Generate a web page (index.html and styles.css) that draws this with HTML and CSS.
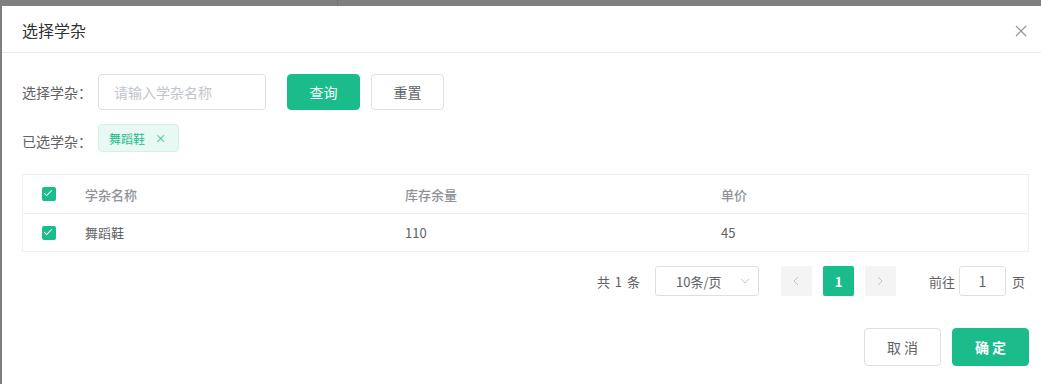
FILE: index.html
```html
<!DOCTYPE html>
<html lang="zh-CN">

<head>
    <meta charset="UTF-8">
    <meta name="viewport" content="width=device-width, initial-scale=1.0">
    <title>选择学杂</title>
    <link rel="stylesheet" href="styles.css">
</head>

<body>

    <!-- Dialog -->
    <div class="dialog">
        <div class="dialog-header">
            <span class="dialog-title">选择学杂</span>
            <span class="dialog-close">
                <svg width="12" height="12" viewBox="0 0 12 12"><path d="M1 1L11 11M11 1L1 11" stroke="#909399" stroke-width="1.2" fill="none"/></svg>
            </span>
        </div>

        <div class="dialog-body">
            <!-- Search -->
            <div class="search-row">
                <label class="form-label">选择学杂：</label>
                <input type="text" class="text-input" placeholder="请输入学杂名称">
                <button class="btn btn-primary btn-search">查询</button>
                <button class="btn btn-plain">重置</button>
            </div>

            <!-- Selected -->
            <div class="selected-row">
                <label class="form-label">已选学杂：</label>
                <span class="tag">舞蹈鞋 <span class="tag-close">×</span></span>
            </div>

            <!-- Table -->
            <div class="table">
                <div class="tr th">
                    <div class="td col-check"><span class="checkbox"></span></div>
                    <div class="td col-name">学杂名称</div>
                    <div class="td col-stock">库存余量</div>
                    <div class="td col-price">单价</div>
                </div>
                <div class="tr">
                    <div class="td col-check"><span class="checkbox"></span></div>
                    <div class="td col-name">舞蹈鞋</div>
                    <div class="td col-stock">110</div>
                    <div class="td col-price">45</div>
                </div>
            </div>

            <!-- Pagination -->
            <div class="pager">
                <span class="pager-total">共 1 条</span>
                <span class="pager-size">10条/页
                    <svg width="10" height="6" viewBox="0 0 10 6"><path d="M1 1L5 5L9 1" stroke="#c0c4cc" fill="none"/></svg>
                </span>
                <span class="pager-btn">
                    <svg width="6" height="10" viewBox="0 0 6 10"><path d="M5 1L1 5L5 9" stroke="#c0c4cc" fill="none"/></svg>
                </span>
                <span class="pager-btn pager-active">1</span>
                <span class="pager-btn">
                    <svg width="6" height="10" viewBox="0 0 6 10"><path d="M1 1L5 5L1 9" stroke="#c0c4cc" fill="none"/></svg>
                </span>
                <span class="pager-jump">前往<span class="pager-input">1</span>页</span>
            </div>
        </div>

        <div class="dialog-footer">
            <button class="btn btn-plain btn-footer">取 消</button>
            <button class="btn btn-primary btn-footer">确 定</button>
        </div>
    </div>

</body>

</html>
```

FILE: styles.css
```css
html,
body {
    margin: 0;
    height: 100%;
    overflow: hidden;
}

body {
    background: #7f7f7f linear-gradient(to right, transparent 337px, #737373 337px, #737373 338px, transparent 338px);
    font-family: "Noto Sans CJK SC", "Noto Sans", sans-serif;
    color: #606266;
    padding: 6px 0 0 2px;
}

/* Dialog */
.dialog {
    background: #fff;
    width: 1047px;
    height: 400px;
}

.dialog-header {
    display: flex;
    justify-content: space-between;
    align-items: center;
    padding: 12px 20px 10px 20px;
    border-bottom: 1px solid #e8eaec;
}

.dialog-title {
    font-size: 16px;
    line-height: 24px;
    color: #303133;
}

.dialog-close {
    display: flex;
    width: 16px;
    justify-content: center;
    margin-top: 2px;
}

.dialog-body {
    padding: 21px 20px 0 20px;
}

.form-label {
    font-size: 14px;
    width: 76px;
    color: #606266;
    white-space: nowrap;
}

/* Search */
.search-row {
    display: flex;
    align-items: center;
}

.text-input {
    width: 168px;
    height: 36px;
    box-sizing: border-box;
    border: 1px solid #dcdfe6;
    border-radius: 4px;
    padding: 0 15px;
    font-family: inherit;
    font-size: 14px;
    outline: none;
}

.text-input::placeholder {
    color: #c0c4cc;
}

.btn {
    height: 36px;
    box-sizing: border-box;
    border-radius: 4px;
    font-family: inherit;
    font-size: 14px;
    cursor: pointer;
}

.btn-primary {
    background: #1abc8b;
    border: 1px solid #1abc8b;
    color: #fff;
}

.btn-plain {
    background: #fff;
    border: 1px solid #dcdfe6;
    color: #606266;
}

.search-row .btn {
    width: 73px;
}

.btn-search {
    margin-left: 21px;
    margin-right: 11px;
}

/* Selected tag */
.selected-row {
    display: flex;
    align-items: center;
    margin-top: 14px;
}

.selected-row .form-label {
    padding-top: 6px;
}

.tag {
    display: inline-flex;
    align-items: center;
    height: 28px;
    box-sizing: border-box;
    padding: 0 12px 0 10px;
    background: #e8f8f3;
    border: 1px solid #d1f2e8;
    border-radius: 4px;
    color: #1abc8b;
    font-size: 12px;
}

.tag-close {
    margin-left: 10px;
    font-size: 11px;
}

/* Table */
.table {
    margin-top: 22px;
    border: 1px solid #ebeef5;
    font-size: 13px;
}

.tr {
    display: flex;
    height: 37px;
    align-items: center;
}

.tr.th {
    height: 38px;
    border-bottom: 1px solid #ebeef5;
    color: #909399;
    font-weight: 500;
}

.col-check {
    width: 43px;
    padding-left: 19px;
    display: flex;
}

.col-name {
    width: 320px;
}

.col-stock {
    width: 316px;
}

.checkbox {
    display: block;
    width: 14px;
    height: 14px;
    border-radius: 2px;
    background: #1abc8b;
    position: relative;
}

.checkbox::after {
    content: "";
    position: absolute;
    left: 4px;
    top: 1px;
    width: 3px;
    height: 7px;
    border: 1px solid #fff;
    border-top: 0;
    border-left: 0;
    transform: rotate(45deg);
}

/* Pagination */
.pager {
    display: flex;
    align-items: center;
    justify-content: flex-end;
    margin-top: 14px;
    padding-right: 4px;
    font-size: 13px;
    color: #606266;
}

.pager-total {
    margin-right: 15px;
    word-spacing: 2px;
}

.pager-size {
    display: flex;
    align-items: center;
    justify-content: space-between;
    width: 104px;
    height: 30px;
    box-sizing: border-box;
    border: 1px solid #dcdfe6;
    border-radius: 3px;
    padding: 0 8px 0 20px;
    margin-right: 22px;
}

.pager-btn {
    display: flex;
    align-items: center;
    justify-content: center;
    width: 31px;
    height: 30px;
    background: #f4f4f5;
    border-radius: 2px;
    margin-right: 11px;
    font-weight: bold;
}

.pager-active {
    background: #1abc8b;
    color: #fff;
}

.pager-jump {
    display: flex;
    align-items: center;
    margin-left: 22px;
}

.pager-input {
    display: flex;
    align-items: center;
    justify-content: center;
    width: 47px;
    height: 30px;
    box-sizing: border-box;
    border: 1px solid #dcdfe6;
    border-radius: 3px;
    font-size: 14px;
    margin: 0 6px 0 4px;
}

/* Footer */
.dialog-footer {
    display: flex;
    justify-content: flex-end;
    gap: 11px;
    padding: 32px 20px 0 20px;
}

.btn-footer {
    width: 77px;
    height: 38px;
}

.btn-footer.btn-primary {
    font-weight: bold;
}
```
